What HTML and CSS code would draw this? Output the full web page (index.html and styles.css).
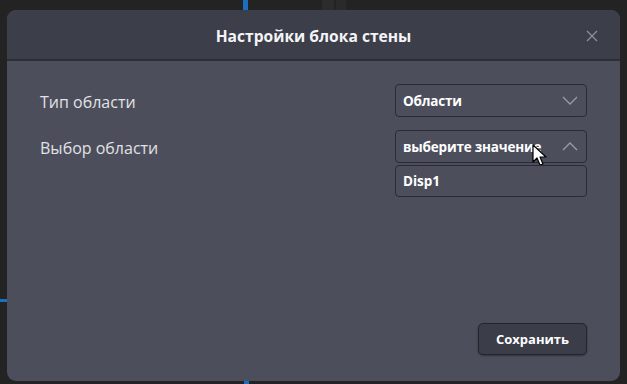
FILE: index.html
```html
<!DOCTYPE html>
<html lang="ru">
<head>
<meta charset="utf-8">
<link rel="stylesheet" href="styles.css">
</head>
<body>
<div class="bg-line bg-blue-top"></div>
<div class="bg-line bg-blue-bottom"></div>
<div class="bg-line bg-blue-left"></div>
<div class="bg-line bg-strip-a"></div>
<div class="bg-line bg-strip-b"></div>
<div class="dialog">
  <div class="header">
    <span class="title">Настройки блока стены</span>
    <svg class="close" width="12" height="12" viewBox="0 0 12 12"><path d="M1 1L11 11M11 1L1 11" stroke="#8a8c96" stroke-width="1.4" fill="none"/></svg>
  </div>
  <div class="content">
    <div class="row">
      <span class="label">Тип области</span>
      <div class="select">
        <span class="value">Области</span>
        <svg class="chev" width="16" height="9" viewBox="0 0 16 9"><path d="M1 1L8 8L15 1" stroke="#9a9ca6" stroke-width="1.3" fill="none"/></svg>
      </div>
    </div>
    <div class="row row2">
      <span class="label">Выбор области</span>
      <div class="field">
        <div class="select">
          <span class="value">выберите значение</span>
          <svg class="chev" width="16" height="9" viewBox="0 0 16 9"><path d="M1 8L8 1L15 8" stroke="#9a9ca6" stroke-width="1.3" fill="none"/></svg>
          <svg class="cursor" width="16" height="24" viewBox="0 0 16 24"><path d="M1 1L1 18L5 14L8 21L11 20L8 13L14 13Z" fill="#fff" stroke="#000" stroke-width="1.2" stroke-linejoin="round"/></svg>
        </div>
        <div class="option">Disp1</div>
      </div>
    </div>
    <div class="spacer"></div>
    <div class="footer">
      <button class="save">Сохранить</button>
    </div>
  </div>
</div>
</body>
</html>
```

FILE: styles.css
```css
html, body {
  margin: 0;
  padding: 0;
}
body {
  width: 627px;
  height: 384px;
  background: #232323;
  position: relative;
  overflow: hidden;
  font-family: "Open Sans", "Noto Sans", sans-serif;
}
.bg-line {
  position: absolute;
}
.bg-blue-top {
  left: 243px;
  top: 0;
  width: 5px;
  height: 10px;
  background: #1a6fc0;
}
.bg-blue-bottom {
  left: 244px;
  top: 381px;
  width: 5px;
  height: 3px;
  background: #1a6fc0;
}
.bg-blue-left {
  left: 0;
  top: 299px;
  width: 7px;
  height: 3px;
  background: #1a6fc0;
}
.bg-strip-a {
  left: 322px;
  top: 0;
  width: 12px;
  height: 10px;
  background: #2c2c2c;
}
.bg-strip-b {
  left: 336px;
  top: 0;
  width: 10px;
  height: 10px;
  background: #2a2a2a;
}
.dialog {
  position: relative;
  margin: 10px 0 0 7px;
  width: 613px;
  height: 371px;
  border-radius: 9px;
  background: #4c4e5b;
  display: flex;
  flex-direction: column;
  overflow: hidden;
}
.header {
  height: 49px;
  background: #3c3e49;
  border-bottom: 2px solid #2d2f37;
  display: flex;
  align-items: center;
  justify-content: center;
  position: relative;
}
.title {
  color: #f4f4f6;
  font-weight: 700;
  font-size: 15.6px;
  margin-top: 3px;
}
.close {
  position: absolute;
  right: 22px;
  top: 20px;
}
.content {
  flex: 1;
  display: flex;
  flex-direction: column;
  padding: 23px 33px 26px 33px;
}
.row {
  display: flex;
  justify-content: space-between;
  align-items: flex-start;
}
.row2 {
  margin-top: 13px;
}
.label {
  color: #e2e2e6;
  font-size: 16px;
  line-height: 29px;
  padding-top: 4px;
}
.field {
  display: flex;
  flex-direction: column;
  gap: 2px;
}
.select, .option {
  box-sizing: border-box;
  width: 192px;
  height: 33px;
  border: 1px solid #2b2c33;
  border-radius: 4px;
  display: flex;
  align-items: center;
  padding: 0 8px 0 7px;
  position: relative;
  color: #ffffff;
  font-weight: 700;
  font-size: 13.5px;
}
.option {
  height: 32px;
}
.value {
  flex: 1;
  min-width: 0;
  white-space: nowrap;
  overflow: visible;
  letter-spacing: -0.2px;
}
.chev {
  flex: none;
}
.cursor {
  position: absolute;
  left: 136px;
  top: 13px;
}
.spacer {
  flex: 1;
}
.footer {
  display: flex;
  justify-content: flex-end;
}
.save {
  box-sizing: border-box;
  width: 109px;
  height: 32px;
  background: #3b3d48;
  border: 1px solid #25262c;
  border-radius: 5px;
  box-shadow: 0 1px 2px rgba(0,0,0,0.35);
  color: #ffffff;
  font-family: inherit;
  font-weight: 700;
  font-size: 13px;
  padding: 0;
}
```
